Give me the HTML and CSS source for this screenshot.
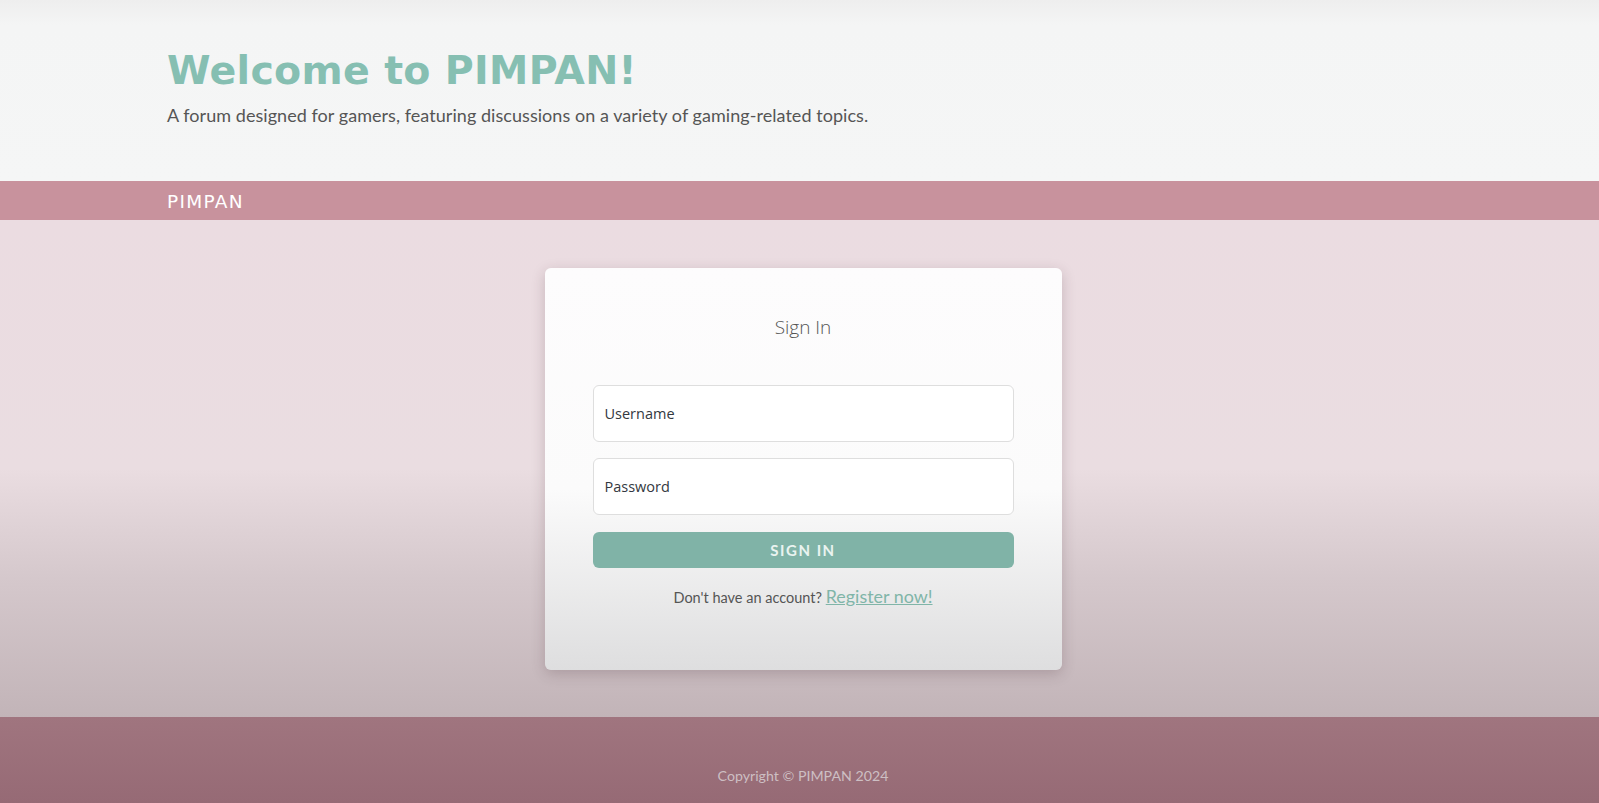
FILE: index.html
```html
<!DOCTYPE html>
<html lang="en">
<head>
<meta charset="utf-8">
<title>PIMPAN</title>
<link rel="stylesheet" href="styles.css">
</head>
<body>
<header class="hero">
  <h1 class="hero-title">Welcome to PIMPAN!</h1>
  <p class="hero-sub">A forum designed for gamers, featuring discussions on a variety of gaming-related topics.</p>
</header>
<nav class="navbar">
  <span class="brand">PIMPAN</span>
</nav>
<main class="main">
  <section class="card">
    <h2 class="card-title">Sign In</h2>
    <form class="form">
      <div class="field"><span class="field-label">Username</span></div>
      <div class="field"><span class="field-label">Password</span></div>
      <button type="button" class="btn">SIGN IN</button>
    </form>
    <p class="register">Don't have an account? <a href="#" class="register-link">Register now!</a></p>
  </section>
</main>
<footer class="footer">
  <p class="copyright">Copyright © PIMPAN 2024</p>
</footer>
</body>
</html>
```

FILE: styles.css
```css
* { box-sizing: border-box; }
html, body { margin: 0; padding: 0; }
body {
  width: 1599px;
  height: 803px;
  overflow: hidden;
  display: flex;
  flex-direction: column;
  font-family: "Lato", "Open Sans", sans-serif;
}
.hero {
  height: 181px;
  background: linear-gradient(#eeeeee 0px, #f4f5f5 25px, #f5f6f6 100%);
  padding: 47px 0 0 167px;
}
.hero-title {
  margin: 0;
  font-family: "DejaVu Sans", Verdana, sans-serif;
  font-weight: bold;
  font-size: 39.5px;
  line-height: 46px;
  color: #86bfb2;
  letter-spacing: 0.3px;
}
.hero-sub {
  margin: 10px 0 0;
  font-size: 18px;
  line-height: 24px;
  color: #555555;
  letter-spacing: 0.05px;
}
.navbar {
  height: 39px;
  background: #c8929d;
  padding-left: 167px;
  padding-top: 1px;
  display: flex;
  align-items: center;
}
.brand {
  font-family: "DejaVu Sans", Verdana, sans-serif;
  font-size: 18.5px;
  color: #ffffff;
  letter-spacing: 1.3px;
}
.main {
  height: 497px;
  background: linear-gradient(#ebdce1 0%, #eadde1 50%, #d5c8cc 72%, #c2b4b8 100%);
  padding-top: 48px;
  display: flex;
  justify-content: center;
}
.card {
  width: 517px;
  height: 402px;
  margin-left: 7px;
  border-radius: 6px;
  background: linear-gradient(#fdfcfd 0%, #fbfbfb 55%, #dededf 100%);
  box-shadow: 0 4px 14px rgba(70, 40, 50, 0.22);
  padding: 48px;
}
.card-title {
  margin: 0;
  text-align: center;
  font-family: "Open Sans", sans-serif;
  font-weight: 300;
  font-size: 19px;
  line-height: 22px;
  color: #555555;
}
.form {
  margin-top: 47px;
  display: flex;
  flex-direction: column;
}
.field {
  height: 57px;
  border: 1px solid #dedede;
  border-radius: 6px;
  background: #ffffff;
  display: flex;
  align-items: center;
  padding-left: 11px;
  margin-bottom: 16px;
}
.field-label {
  font-family: "Open Sans", sans-serif;
  font-size: 14.5px;
  color: #333840;
}
.btn {
  height: 36px;
  border: none;
  border-radius: 6px;
  background: #80b3a7;
  color: #eaf3f0;
  font-family: "Lato", sans-serif;
  font-weight: bold;
  font-size: 15px;
  letter-spacing: 1.5px;
  margin-top: 1px;
}
.register {
  margin: 17px 0 0;
  text-align: center;
  font-size: 14.5px;
  color: #555555;
}
.register-link {
  color: #80b5a8;
  font-size: 17.9px;
}
.footer {
  height: 86px;
  background: linear-gradient(#a0757f, #966a75);
  display: flex;
  justify-content: center;
  padding-top: 49px;
  padding-left: 7px;
}
.copyright {
  margin: 0;
  font-size: 14.2px;
  line-height: 20px;
  color: #cdbfc3;
}
```
